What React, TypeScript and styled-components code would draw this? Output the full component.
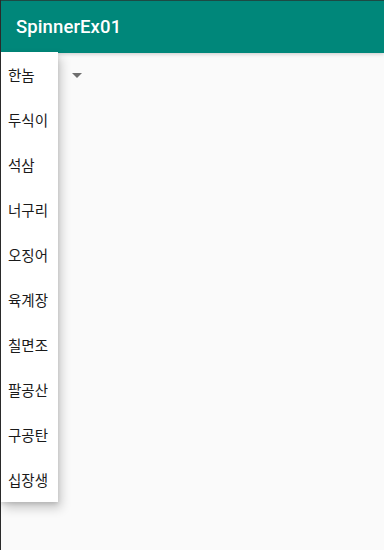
import React from 'react';
import styled, { createGlobalStyle } from 'styled-components';

const GlobalStyle = createGlobalStyle`
    html, body {
        margin: 0;
        padding: 0;
        background: #fafafa;
    }
    #root {
        height: 550px;
    }
`;

const options = ['한놈', '두식이', '석삼', '너구리', '오징어', '육계장', '칠면조', '팔공산', '구공탄', '십장생'];

const Screen = styled.div`
    height: 550px;
    display: flex;
    flex-direction: column;
    border-left: 1px solid #2a2a2a;
    box-sizing: border-box;
    font-family: Roboto, "Noto Sans CJK KR", sans-serif;
    background: #fafafa;
    overflow: hidden;
`;

const AppBar = styled.header`
    height: 53px;
    flex-shrink: 0;
    box-sizing: border-box;
    border-top: 1px solid #1d4a44;
    background: #00877a;
    display: flex;
    align-items: center;
    padding: 0 0 0 15px;
    position: relative;
    z-index: 2;
    box-shadow: 0 1px 4px rgba(0, 0, 0, 0.2);
`;

const Title = styled.h1`
    margin: 0;
    color: #ffffff;
    font-family: Roboto, sans-serif;
    font-weight: 500;
    font-size: 18.5px;
    letter-spacing: 0.1px;
`;

const Content = styled.main`
    flex: 1;
    position: relative;
`;

// the spinner itself; its selected label sits under the open popup
const SpinnerRow = styled.div`
    height: 44px;
    display: flex;
    align-items: center;
    padding-left: 71px;
`;

const Arrow = styled.span`
    width: 0;
    height: 0;
    border-left: 5px solid transparent;
    border-right: 5px solid transparent;
    border-top: 5px solid #6f6f6f;
    margin-top: 1px;
`;

const Popup = styled.ul`
    position: absolute;
    top: -1px;
    left: 0;
    width: 57px;
    margin: 0;
    padding: 0;
    list-style: none;
    background: #ffffff;
    z-index: 3;
    box-shadow: 3px 6px 10px rgba(0, 0, 0, 0.2), 0 2px 4px rgba(0, 0, 0, 0.12);
`;

const Option = styled.li`
    height: 45px;
    display: flex;
    align-items: center;
    padding-left: 7px;
    font-family: "Noto Sans CJK KR", sans-serif;
    font-size: 14.5px;
    color: #1a1a1a;
    white-space: nowrap;
`;

export default function App() {
    return (
        <>
            <GlobalStyle />
            <Screen>
                <AppBar>
                    <Title>SpinnerEx01</Title>
                </AppBar>
                <Content>
                    <SpinnerRow>
                        <Arrow />
                    </SpinnerRow>
                    <Popup>
                        {options.map(o => (
                            <Option key={o}>{o}</Option>
                        ))}
                    </Popup>
                </Content>
            </Screen>
        </>
    );
}
